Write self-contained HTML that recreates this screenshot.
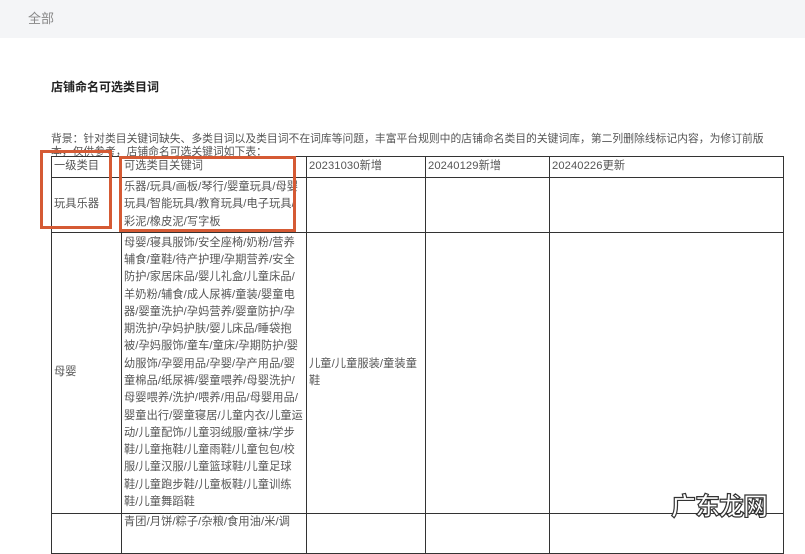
<!DOCTYPE html>
<html><head><meta charset="utf-8"><style>
body{margin:0;width:805px;height:534px;overflow:hidden;background:#fff;font-family:"Liberation Sans","Noto Sans CJK SC",sans-serif;color:#333;position:relative}
.top{position:absolute;left:0;top:0;width:805px;height:38px;background:#f4f5f7}
.top span{position:absolute;left:28px;top:8px;font-size:13px;color:#888}
.title{position:absolute;left:51px;top:78px;font-size:12px;font-weight:bold;color:#222}
.p{position:absolute;left:51px;top:133px;width:740px;font-size:10.8px;line-height:13px;color:#555;white-space:nowrap}
table{position:absolute;left:51px;top:156px;width:732px;border-collapse:collapse;table-layout:fixed;font-size:11.2px;color:#555}
td{border:1px solid #333;padding:0 2px;line-height:17.3px;vertical-align:middle;white-space:nowrap;overflow:hidden;letter-spacing:0.1px}
.box{position:absolute;border:3px solid #d55a34;box-sizing:border-box}
.wm{position:absolute;left:671px;top:487px;font-size:25px;font-weight:bold;color:#fff;-webkit-text-stroke:1.2px #333;letter-spacing:-1px;font-family:"Noto Sans CJK SC",sans-serif}
</style></head><body>
<div class="top"><span>全部</span></div>
<div class="title">店铺命名可选类目词</div>
<div class="p">背景：针对类目关键词缺失、多类目词以及类目词不在词库等问题，丰富平台规则中的店铺命名类目的关键词库，第二列删除线标记内容，为修订前版<br>本，仅供参考，店铺命名可选关键词如下表：</div>
<table>
<colgroup><col style="width:70px"><col style="width:185px"><col style="width:119px"><col style="width:124px"><col style="width:234px"></colgroup>
<tr style="height:21px"><td>一级类目</td><td>可选类目关键词</td><td>20231030新增</td><td>20240129新增</td><td>20240226更新</td></tr>
<tr style="height:55px"><td>玩具乐器</td><td>乐器/玩具/画板/琴行/婴童玩具/母婴<br>玩具/智能玩具/教育玩具/电子玩具/<br>彩泥/橡皮泥/写字板</td><td></td><td></td><td></td></tr>
<tr style="height:281px"><td>母婴</td><td>母婴/寝具服饰/安全座椅/奶粉/营养<br>辅食/童鞋/待产护理/孕期营养/安全<br>防护/家居床品/婴儿礼盒/儿童床品/<br>羊奶粉/辅食/成人尿裤/童装/婴童电<br>器/婴童洗护/孕妈营养/婴童防护/孕<br>期洗护/孕妈护肤/婴儿床品/睡袋抱<br>被/孕妈服饰/童车/童床/孕期防护/婴<br>幼服饰/孕婴用品/孕婴/孕产用品/婴<br>童棉品/纸尿裤/婴童喂养/母婴洗护/<br>母婴喂养/洗护/喂养/用品/母婴用品/<br>婴童出行/婴童寝居/儿童内衣/儿童运<br>动/儿童配饰/儿童羽绒服/童袜/学步<br>鞋/儿童拖鞋/儿童雨鞋/儿童包包/校<br>服/儿童汉服/儿童篮球鞋/儿童足球<br>鞋/儿童跑步鞋/儿童板鞋/儿童训练<br>鞋/儿童舞蹈鞋</td><td>儿童/儿童服装/童装童<br>鞋</td><td></td><td></td></tr>
<tr style="height:40px"><td></td><td style="vertical-align:top">青团/月饼/粽子/杂粮/食用油/米/调</td><td></td><td></td><td></td></tr>
</table>
<div class="box" style="left:40px;top:150px;width:72px;height:79px"></div>
<div class="box" style="left:119px;top:156px;width:177px;height:76px"></div>
<div class="wm">广东龙网</div>
</body></html>
